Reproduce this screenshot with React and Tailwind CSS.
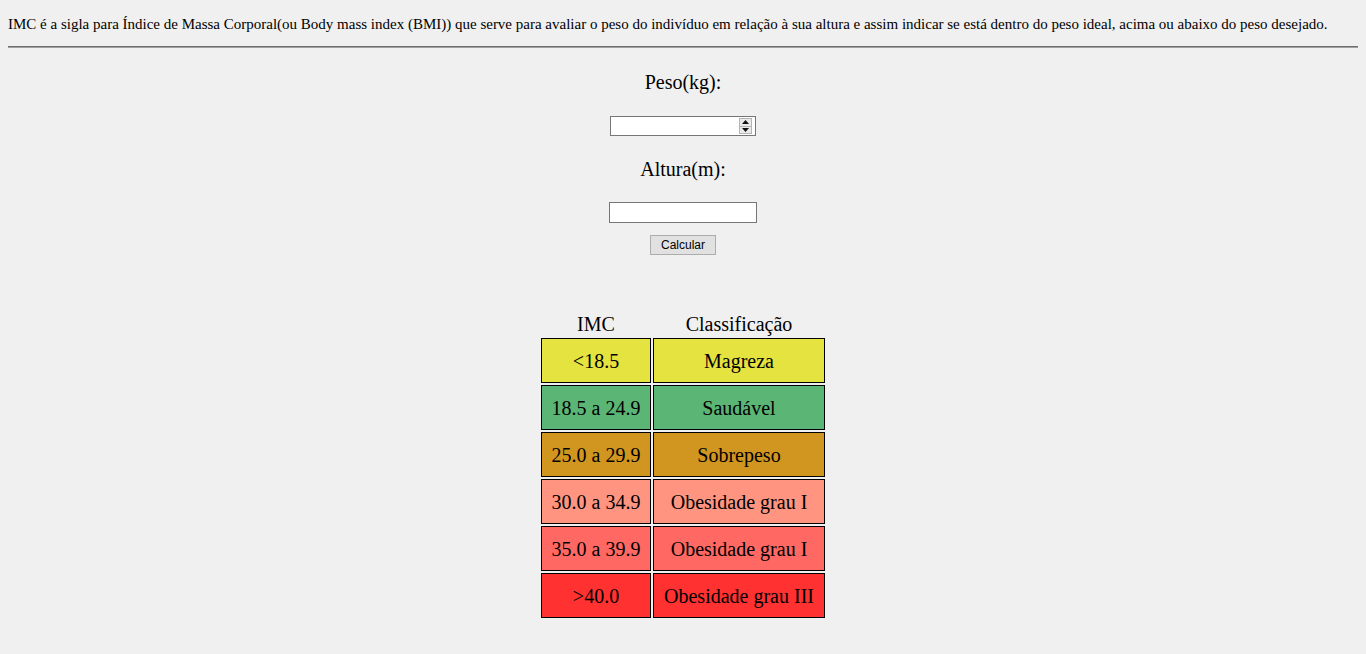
import { useState } from 'react';

const rows = [
  { imc: '<18.5', label: 'Magreza', bg: 'bg-[#e4e33f]' },
  { imc: '18.5 a 24.9', label: 'Saudável', bg: 'bg-[#5bb574]' },
  { imc: '25.0 a 29.9', label: 'Sobrepeso', bg: 'bg-[#d1961f]' },
  { imc: '30.0 a 34.9', label: 'Obesidade grau I', bg: 'bg-[#ff9580]' },
  { imc: '35.0 a 39.9', label: 'Obesidade grau I', bg: 'bg-[#ff6863]' },
  { imc: '>40.0', label: 'Obesidade grau III', bg: 'bg-[#ff3131]' },
];

function Spinner() {
  return (
    <div className="flex flex-col w-[13px] h-[16px] border border-[#b5b5b5] bg-[#eaeaea]">
      <div className="flex-1 flex items-center justify-center border-b border-[#b5b5b5]">
        <svg width="7" height="4" viewBox="0 0 7 4">
          <path d="M0 4 L3.5 0 L7 4 Z" fill="#111" />
        </svg>
      </div>
      <div className="flex-1 flex items-center justify-center">
        <svg width="7" height="4" viewBox="0 0 7 4">
          <path d="M0 0 L3.5 4 L7 0 Z" fill="#111" />
        </svg>
      </div>
    </div>
  );
}

export default function App() {
  const [peso, setPeso] = useState('');
  const [altura, setAltura] = useState('');

  return (
    <div className="min-h-screen bg-[#f0f0f0] px-2 pt-2 pb-8 text-black font-['Liberation_Serif',serif]">
      <p className="mt-2 text-[15px] leading-4">
        IMC é a sigla para Índice de Massa Corporal(ou Body mass index (BMI)) que serve para avaliar o peso do indivíduo em relação à sua altura e assim indicar se está dentro do peso ideal, acima ou abaixo do peso desejado.
      </p>
      <div className="mt-[14px] h-[2px] border-t border-[#6e6e6e] border-b border-b-[#a0a0a0]" />

      <div className="flex flex-col items-center">
        <div className="mt-[23px] text-[20px] leading-[22px]">Peso(kg):</div>
        <div className="mt-[23px] flex items-center w-[146px] h-[20px] bg-white border border-[#767676] pr-[3px] justify-end">
          <input
            type="text"
            value={peso}
            onChange={(e) => setPeso(e.target.value)}
            className="flex-1 min-w-0 h-full outline-none px-1 text-[13px]"
          />
          <Spinner />
        </div>

        <div className="mt-[22px] text-[20px] leading-[22px]">Altura(m):</div>
        <input
          type="text"
          value={altura}
          onChange={(e) => setAltura(e.target.value)}
          className="mt-[22px] w-[148px] h-[21px] bg-white border border-[#767676] outline-none px-1 text-[13px]"
        />
        <button className="mt-[12px] w-[66px] h-[20px] bg-[#e1e1e1] border border-[#adadad] text-[12px] leading-none font-['Liberation_Sans',sans-serif]">
          Calcular
        </button>

        <div className="mt-[57px] grid grid-cols-[110px_172px] gap-[2px] text-[20px]">
          <div className="h-[24px] leading-[24px] text-center">IMC</div>
          <div className="h-[24px] leading-[24px] text-center">Classificação</div>
          {rows.map((r, i) => (
            <div key={i} className="contents">
              <div className={`h-[45px] pt-[1px] flex items-center justify-center border border-black ${r.bg}`}>{r.imc}</div>
              <div className={`h-[45px] pt-[1px] flex items-center justify-center border border-black ${r.bg}`}>{r.label}</div>
            </div>
          ))}
        </div>
      </div>
    </div>
  );
}
